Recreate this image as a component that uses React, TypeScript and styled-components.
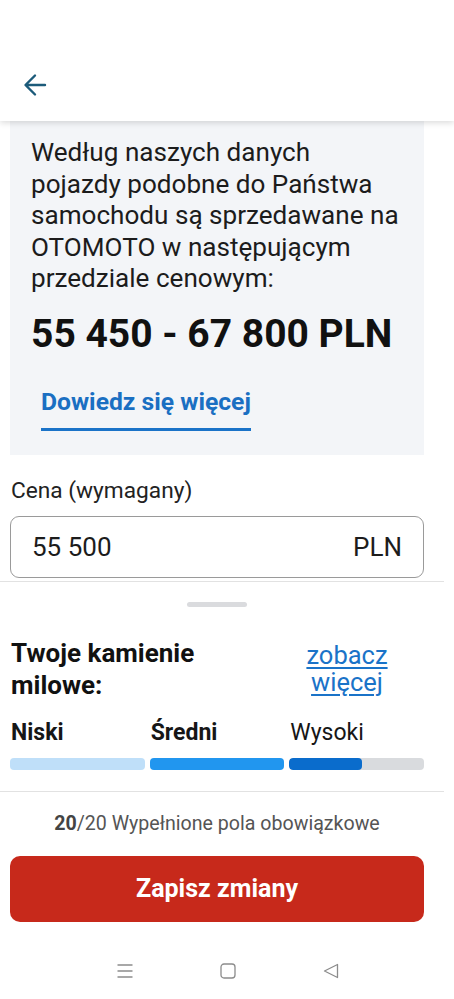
import React from "react";
import styled, { createGlobalStyle } from "styled-components";

const GlobalStyle = createGlobalStyle`
  html, body {
    margin: 0;
    padding: 0;
    background: #ffffff;
    font-family: Roboto, "Liberation Sans", Arial, sans-serif;
    color: #1a1a1a;
  }
  * {
    box-sizing: border-box;
  }
`;

const Page = styled.div`
  width: 454px;
  height: 999px;
  overflow: hidden;
  background: #ffffff;
  display: flex;
  flex-direction: column;
`;

const Header = styled.header`
  height: 121px;
  flex-shrink: 0;
  padding: 73px 0 0 23px;
  background: #ffffff;
  box-shadow: 0 2px 6px rgba(0, 0, 0, 0.14);
  position: relative;
  z-index: 2;
`;

const BackButton = styled.button`
  border: none;
  background: none;
  padding: 0;
  width: 24px;
  height: 24px;
  display: block;
  cursor: pointer;
`;

const Content = styled.main`
  padding: 0 30px 0 10px;
`;

const InfoCard = styled.section`
  background: #f3f5f8;
  padding: 16px 10px 24px 21px;
`;

const InfoText = styled.p`
  margin: 0;
  font-size: 26.1px;
  line-height: 31.5px;
  color: #1c1c1c;
  white-space: nowrap;
`;

const PriceRange = styled.div`
  margin-top: 16px;
  font-size: 39px;
  line-height: 46px;
  font-weight: 700;
  color: #111111;
`;

const MoreLink = styled.a`
  display: inline-block;
  margin: 30px 0 0 10px;
  padding-bottom: 11px;
  border-bottom: 3px solid #1a73c8;
  font-size: 24.7px;
  line-height: 30px;
  font-weight: 700;
  color: #1a6fc2;
  text-decoration: none;
`;

const FieldLabel = styled.label`
  display: block;
  margin: 24px 0 0 1px;
  font-size: 22.7px;
  line-height: 24px;
  color: #222222;
`;

const InputBox = styled.div`
  margin-top: 13px;
  height: 62px;
  border: 1px solid #9a9a9a;
  border-radius: 9px;
  display: flex;
  align-items: center;
  justify-content: space-between;
  padding: 0 21px 0 21px;
  font-size: 26px;
  color: #1c1c1c;
`;

const Sheet = styled.section`
  margin-top: 3px;
  border-top: 1px solid #e2e2e2;
  width: 444px;
  padding: 20px 20px 0 10px;
`;

const Handle = styled.div`
  width: 60px;
  height: 5px;
  border-radius: 3px;
  background: #dadbde;
  margin: 0 0 0 177px;
`;

const MilestoneRow = styled.div`
  margin-top: 30px;
  display: flex;
  align-items: flex-start;
  justify-content: space-between;
`;

const MilestoneTitle = styled.h2`
  margin: 0 0 0 1px;
  font-size: 26px;
  line-height: 32px;
  font-weight: 700;
  color: #111111;
  width: 220px;
`;

const SeeMore = styled.a`
  width: 110px;
  margin-right: 22px;
  padding-top: 5px;
  text-align: center;
  font-size: 25.5px;
  line-height: 27px;
  color: #1a73c8;
  text-decoration: underline;
  text-decoration-thickness: 1.5px;
  text-underline-offset: 3px;
`;

const Levels = styled.div`
  margin-top: 19px;
  display: grid;
  grid-template-columns: repeat(3, 1fr);
  column-gap: 5px;
`;

const LevelLabel = styled.div<{ $active: boolean }>`
  padding-left: 1px;
  font-size: 23px;
  line-height: 26px;
  font-weight: ${(p) => (p.$active ? 700 : 400)};
  color: #161616;
`;

const Bar = styled.div<{ $color: string }>`
  margin-top: 12px;
  height: 12px;
  border-radius: 4px;
  background: ${(p) => p.$color};
  overflow: hidden;
`;

const BarFill = styled.div`
  height: 100%;
  background: #0a6ccc;
  border-radius: 4px;
`;

const Footer = styled.footer`
  margin-top: 21px;
  border-top: 1px solid #e2e2e2;
  width: 444px;
  padding: 20px 20px 0 10px;
`;

const Progress = styled.div`
  text-align: center;
  font-size: 19.6px;
  line-height: 24px;
  color: #555555;

  b {
    font-weight: 700;
    color: #444444;
  }
`;

const SaveButton = styled.button`
  margin-top: 20px;
  width: 414px;
  height: 66px;
  border: none;
  border-radius: 10px;
  background: #c7291b;
  color: #ffffff;
  font-family: inherit;
  font-size: 25px;
  font-weight: 700;
  cursor: pointer;
`;

const NavBar = styled.nav`
  margin-top: 41px;
  display: flex;
  justify-content: center;
  gap: 87px;
  padding-left: 21px;
`;

const NavIcon = styled.svg`
  width: 16px;
  height: 16px;
  display: block;
`;

const infoLines = [
  "Według naszych danych",
  "pojazdy podobne do Państwa",
  "samochodu są sprzedawane na",
  "OTOMOTO w następującym",
  "przedziale cenowym:",
];

const levels = [
  { name: "Niski", active: true, color: "#bfdff9", fill: 100 },
  { name: "Średni", active: true, color: "#2196ef", fill: 100 },
  { name: "Wysoki", active: false, color: "#d9dbde", fill: 54 },
];

export default function App() {
  return (
    <Page>
      <GlobalStyle />
      <Header>
        <BackButton aria-label="Wstecz">
          <svg width="24" height="24" viewBox="0 0 24 24" fill="none">
            <path
              d="M22 12H3M12 2.5L2.5 12L12 21.5"
              stroke="#1c5b7a"
              strokeWidth="2.4"
              strokeLinecap="round"
              strokeLinejoin="round"
            />
          </svg>
        </BackButton>
      </Header>
      <Content>
        <InfoCard>
          <InfoText>
            {infoLines.map((line, i) => (
              <React.Fragment key={line}>
                {line}
                {i < infoLines.length - 1 && <br />}
              </React.Fragment>
            ))}
          </InfoText>
          <PriceRange>55 450 - 67 800 PLN</PriceRange>
          <MoreLink href="#">Dowiedz się więcej</MoreLink>
        </InfoCard>
        <FieldLabel>Cena (wymagany)</FieldLabel>
        <InputBox>
          <span>55 500</span>
          <span>PLN</span>
        </InputBox>
      </Content>
      <Sheet>
        <Handle />
        <MilestoneRow>
          <MilestoneTitle>Twoje kamienie milowe:</MilestoneTitle>
          <SeeMore href="#">zobacz więcej</SeeMore>
        </MilestoneRow>
        <Levels>
          {levels.map((l) => (
            <LevelLabel key={l.name} $active={l.active}>
              {l.name}
            </LevelLabel>
          ))}
          {levels.map((l) => (
            <Bar key={l.name} $color={l.color}>
              {!l.active && <BarFill style={{ width: `${l.fill}%` }} />}
            </Bar>
          ))}
        </Levels>
      </Sheet>
      <Footer>
        <Progress>
          <b>20</b>/20 Wypełnione pola obowiązkowe
        </Progress>
        <SaveButton>Zapisz zmiany</SaveButton>
        <NavBar>
          <NavIcon viewBox="0 0 16 16" fill="none">
            <path d="M0.5 2H15.5M0.5 8H15.5M0.5 14H15.5" stroke="#8c8c8c" strokeWidth="1.3" />
          </NavIcon>
          <NavIcon viewBox="0 0 16 16" fill="none">
            <rect x="1" y="1" width="14" height="14" rx="3" stroke="#8c8c8c" strokeWidth="1.3" />
          </NavIcon>
          <NavIcon viewBox="0 0 16 16" fill="none">
            <path d="M14.5 1.5V14.5L1.5 8Z" stroke="#8c8c8c" strokeWidth="1.3" strokeLinejoin="round" />
          </NavIcon>
        </NavBar>
      </Footer>
    </Page>
  );
}
